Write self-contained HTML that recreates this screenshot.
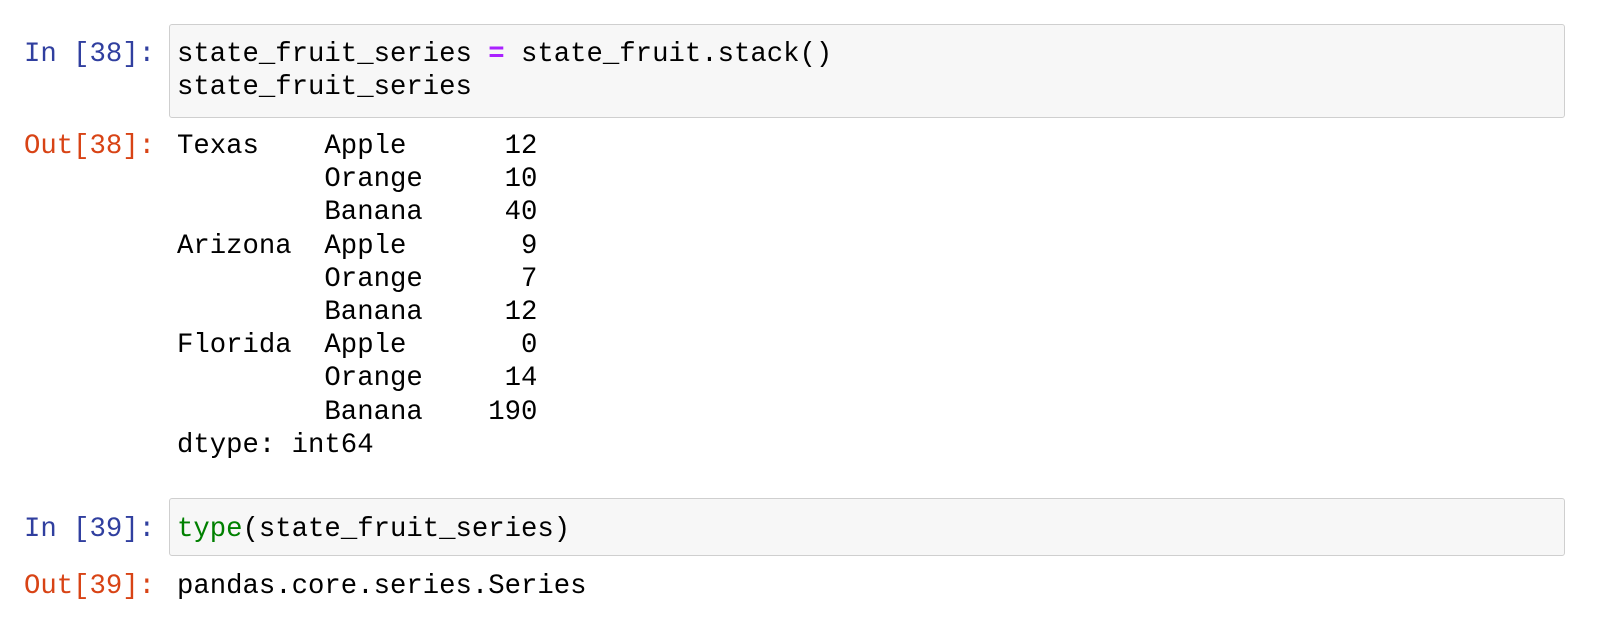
<!DOCTYPE html>
<html><head><style>
body{margin:0;width:1600px;height:626px;background:#fff;position:relative;overflow:hidden;font-family:"Liberation Mono",monospace;}
pre{margin:0;position:absolute;font-family:"Liberation Mono",monospace;font-size:27.3px;line-height:33.2px;color:#000;}
.p{right:1445px;text-align:right;}
.in{color:#303F9F}.out{color:#D84315}
.box{position:absolute;left:169px;width:1396px;background:#f7f7f7;border:1.5px solid #cfcfcf;border-radius:3px;box-sizing:border-box;}
</style></head><body>
<div class="box" style="top:24px;height:94px"></div>
<pre class="p in" style="top:38px">In [38]:</pre>
<pre style="left:177px;top:38px">state_fruit_series <span style="color:#AA22FF;font-weight:bold">=</span> state_fruit.stack()
state_fruit_series</pre>
<pre class="p out" style="top:130px">Out[38]:</pre>
<pre style="left:177px;top:130px">Texas    Apple      12
         Orange     10
         Banana     40
Arizona  Apple       9
         Orange      7
         Banana     12
Florida  Apple       0
         Orange     14
         Banana    190
dtype: int64</pre>
<div class="box" style="top:498px;height:58px"></div>
<pre class="p in" style="top:513px">In [39]:</pre>
<pre style="left:177px;top:513px"><span style="color:#008000">type</span>(state_fruit_series)</pre>
<pre class="p out" style="top:570px">Out[39]:</pre>
<pre style="left:177px;top:570px">pandas.core.series.Series</pre>
</body></html>
